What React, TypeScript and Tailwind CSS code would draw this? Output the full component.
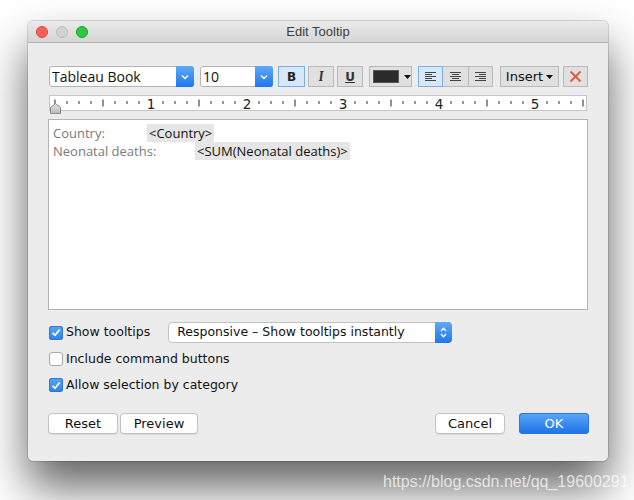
import type { FC } from "react";

const ui = { fontFamily: '"DejaVu Sans", "Liberation Sans", sans-serif' };
const tab = { fontFamily: '"Open Sans", "Liberation Sans", sans-serif' };

const Chevron: FC = () => (
  <svg width="8" height="6" viewBox="0 0 8 6">
    <path d="M1 1.5 L4 4.5 L7 1.5" fill="none" stroke="#fff" strokeWidth="1.4" />
  </svg>
);

const SelectBox: FC<{ label: string; width: string }> = ({ label, width }) => (
  <div className={`flex h-[21px] ${width} items-stretch rounded-[3px] border border-[#b4b4b4] bg-white`}>
    <div className="flex flex-1 items-center pl-[2px] text-[14px] text-[#111]" style={tab}>
      {label}
    </div>
    <div className="-my-px -mr-px flex w-[18px] items-center justify-center rounded-r-[3px] bg-gradient-to-b from-[#5fa9f7] to-[#1c76ea]">
      <Chevron />
    </div>
  </div>
);

const AlignIcon: FC<{ kind: "l" | "c" | "r" }> = ({ kind }) => {
  const rows = [
    [0, 11],
    [kind === "l" ? 0 : kind === "c" ? 2 : 4, 7],
    [0, 11],
    [kind === "l" ? 0 : kind === "c" ? 2 : 4, 7],
    [0, 11],
  ];
  return (
    <svg width="11" height="9" viewBox="0 0 11 9">
      {rows.map(([x, w], i) => (
        <rect key={i} x={x} y={i * 2} width={w} height="1" fill="#444" />
      ))}
    </svg>
  );
};

const Ruler: FC = () => {
  const ticks = [];
  for (let n = 0; n <= 44; n++) {
    const x = 5 + n * 12;
    if (n % 8 === 0 && n > 0) {
      ticks.push(
        <text key={n} x={x} y="12.5" textAnchor="middle" fontSize="13.5" fill="#222" fontFamily="DejaVu Sans, sans-serif">
          {n / 8}
        </text>
      );
    } else if (n % 4 === 0) {
      ticks.push(<rect key={n} x={x - 0.5} y="3.5" width="1" height="7" fill="#222" />);
    } else {
      ticks.push(<rect key={n} x={x - 0.5} y="5" width="1" height="3" fill="#333" />);
    }
  }
  return (
    <div className="relative h-[16px] w-[538px] border border-[#c4c4c4] bg-white">
      <svg width="538" height="16" viewBox="0 0 538 16" className="block">
        {ticks}
      </svg>
      <svg width="11" height="11" viewBox="0 0 11 11" className="absolute left-0 top-[7px]">
        <defs>
          <linearGradient id="th" x1="0" y1="0" x2="0" y2="1">
            <stop offset="0" stopColor="#e4e4e4" />
            <stop offset="1" stopColor="#b9b9b9" />
          </linearGradient>
        </defs>
        <path d="M5.5 0.5 L10.5 4.5 L10.5 10.5 L0.5 10.5 L0.5 4.5 Z" fill="url(#th)" stroke="#8a8a8a" />
      </svg>
    </div>
  );
};

const Check: FC<{ on: boolean }> = ({ on }) =>
  on ? (
    <div className="flex h-[14px] w-[14px] items-center justify-center rounded-[3px] bg-gradient-to-b from-[#5aa6f6] to-[#2a7fea] shadow-[inset_0_0_0_1px_#2f78d8]">
      <svg width="10" height="9" viewBox="0 0 10 9">
        <path d="M1.5 4.8 L4 7.2 L8.6 1.6" fill="none" stroke="#fff" strokeWidth="1.7" />
      </svg>
    </div>
  ) : (
    <div className="h-[14px] w-[14px] rounded-[3px] border border-[#a9a9a9] bg-white" />
  );

const Btn: FC<{ label: string; width: string; primary?: boolean }> = ({ label, width, primary }) =>
  primary ? (
    <div className={`flex h-[21px] ${width} items-center justify-center rounded-[4px] bg-gradient-to-b from-[#5ba9f8] to-[#1a70e6] text-[13px] text-white shadow-[inset_0_0_0_1px_#2a78e0]`}>
      {label}
    </div>
  ) : (
    <div className={`flex h-[21px] ${width} items-center justify-center rounded-[4px] border border-[#c2c2c2] bg-white text-[13px] text-[#111] shadow-[0_1px_0_rgba(0,0,0,0.08)]`}>
      {label}
    </div>
  );

export default function App() {
  return (
    <div className="relative h-[500px] w-[634px] overflow-hidden bg-white" style={ui}>
      <div className="ml-[28px] pt-[21px]">
        <div className="flex h-[440px] w-[580px] flex-col rounded-[5px] bg-[#ececec] shadow-[0_26px_46px_rgba(0,0,0,0.62),0_0_0_1px_rgba(0,0,0,0.14)]">
          {/* title bar */}
          <div className="relative flex h-[22px] items-center justify-center rounded-t-[5px] border-b border-[#b4b4b4] bg-gradient-to-b from-[#ebebeb] to-[#d5d5d5]">
            <div className="absolute left-[8px] top-[5px] flex gap-[8px]">
              <span className="h-[12px] w-[12px] rounded-full border border-[#e0443e] bg-[#fc5f57]" />
              <span className="h-[12px] w-[12px] rounded-full border border-[#bcbcbc] bg-[#d2d2d2]" />
              <span className="h-[12px] w-[12px] rounded-full border border-[#1ea32d] bg-[#2dc840]" />
            </div>
            <span className="text-[13px] text-[#3d3d3d]" style={{ fontFamily: '"Liberation Sans", sans-serif' }}>
              Edit Tooltip
            </span>
          </div>

          <div className="flex flex-col pl-[21px] pr-[20px]">
            {/* toolbar */}
            <div className="mt-[23px] flex h-[21px] items-center">
              <SelectBox label="Tableau Book" width="w-[145px]" />
              <div className="ml-[6px]">
                <SelectBox label="10" width="w-[73px]" />
              </div>
              <div className="ml-[5px] flex h-[21px] w-[27px] items-center justify-center border border-[#7eaee0] bg-[#d7e8fa] text-[12px] font-bold text-[#222]">
                B
              </div>
              <div className="ml-[3px] flex h-[21px] w-[26px] items-center justify-center border border-[#b9b9b9] bg-[#e0e0e0] font-serif text-[13px] italic font-bold text-[#333]">
                I
              </div>
              <div className="ml-[3px] flex h-[21px] w-[26px] items-center justify-center border border-[#b9b9b9] bg-[#e0e0e0] text-[12px] font-bold text-[#333] underline">
                U
              </div>
              <div className="ml-[6px] flex h-[21px] w-[43px] items-center gap-[5px] border border-[#b9b9b9] bg-[#e0e0e0] pl-[3px]">
                <div className="h-[13px] w-[26px] border border-[#555] bg-[#2b2b2b]" />
                <svg width="7" height="4" viewBox="0 0 7 4">
                  <path d="M0 0 H7 L3.5 4 Z" fill="#111" />
                </svg>
              </div>
              <div className="ml-[6px] flex h-[21px]">
                <div className="flex w-[25px] items-center justify-center border border-[#7eaee0] bg-[#d7e8fa]">
                  <AlignIcon kind="l" />
                </div>
                <div className="flex w-[25px] items-center justify-center border-y border-[#b9b9b9] bg-[#e0e0e0]">
                  <AlignIcon kind="c" />
                </div>
                <div className="flex w-[25px] items-center justify-center border border-[#b9b9b9] bg-[#e0e0e0]">
                  <AlignIcon kind="r" />
                </div>
              </div>
              <div className="ml-[7px] flex h-[21px] w-[59px] items-center justify-center gap-[3px] border border-[#b9b9b9] bg-[#e0e0e0] text-[13px] text-[#111]">
                Insert
                <svg width="7" height="4" viewBox="0 0 7 4">
                  <path d="M0 0 H7 L3.5 4 Z" fill="#111" />
                </svg>
              </div>
              <div className="ml-[4px] flex h-[21px] w-[25px] items-center justify-center border border-[#b9b9b9] bg-[#e0e0e0]">
                <svg width="13" height="13" viewBox="0 0 13 13">
                  <path d="M1.5 1.5 L11.5 11.5 M11.5 1.5 L1.5 11.5" stroke="#e2573a" strokeWidth="1.8" />
                </svg>
              </div>
            </div>

            {/* ruler */}
            <div className="mt-[8px]">
              <Ruler />
            </div>

            {/* editor */}
            <div className="-ml-px mt-[8px] h-[191px] w-[540px] border border-[#b3b3b3] bg-white pl-[4px] pt-[4px] text-[13px] leading-[18px]" style={tab}>
              <div className="flex">
                <span className="w-[94px] text-[#7b7b7b]">Country:</span>
                <span className="bg-[#e6e6e6] px-[2px] font-medium text-[#111]">&lt;Country&gt;</span>
              </div>
              <div className="flex">
                <span className="w-[142px] text-[#7b7b7b]">Neonatal deaths:</span>
                <span className="bg-[#e6e6e6] px-[2px] font-medium text-[#111]">&lt;SUM(Neonatal deaths)&gt;</span>
              </div>
            </div>

            {/* options */}
            <div className="mt-[12px] flex h-[21px] items-center text-[12.5px] text-[#111]">
              <Check on />
              <span className="ml-[3px]">Show tooltips</span>
              <div className="ml-[18px] flex h-[21px] w-[284px] items-stretch rounded-[4px] border border-[#c2c2c2] bg-white">
                <span className="flex flex-1 items-center pl-[8px]">Responsive – Show tooltips instantly</span>
                <div className="-my-px -mr-px flex w-[17px] flex-col items-center justify-center gap-[1px] rounded-r-[4px] bg-gradient-to-b from-[#5fa9f7] to-[#1c76ea]">
                  <svg width="7" height="5" viewBox="0 0 7 5">
                    <path d="M1 4 L3.5 1.3 L6 4" fill="none" stroke="#fff" strokeWidth="1.3" />
                  </svg>
                  <svg width="7" height="5" viewBox="0 0 7 5">
                    <path d="M1 1 L3.5 3.7 L6 1" fill="none" stroke="#fff" strokeWidth="1.3" />
                  </svg>
                </div>
              </div>
            </div>
            <div className="mt-[6px] flex h-[20px] items-center text-[12.5px] text-[#111]">
              <Check on={false} />
              <span className="ml-[3px]">Include command buttons</span>
            </div>
            <div className="mt-[6px] flex h-[20px] items-center text-[12.5px] text-[#111]">
              <Check on />
              <span className="ml-[3px]">Allow selection by category</span>
            </div>

            {/* buttons */}
            <div className="-ml-px mt-[18px] flex items-center">
              <Btn label="Reset" width="w-[70px]" />
              <div className="ml-[2px]">
                <Btn label="Preview" width="w-[78px]" />
              </div>
              <div className="ml-auto">
                <Btn label="Cancel" width="w-[70px]" />
              </div>
              <div className="ml-[14px] mr-[-1px]">
                <Btn label="OK" width="w-[70px]" primary />
              </div>
            </div>
          </div>
        </div>
      </div>

      <div
        className="absolute left-[383px] top-[470px] text-[16px] text-[rgba(255,255,255,0.72)]"
        style={{ fontFamily: '"Liberation Sans", sans-serif' }}
      >
        https://blog.csdn.net/qq_19600291
      </div>
    </div>
  );
}
